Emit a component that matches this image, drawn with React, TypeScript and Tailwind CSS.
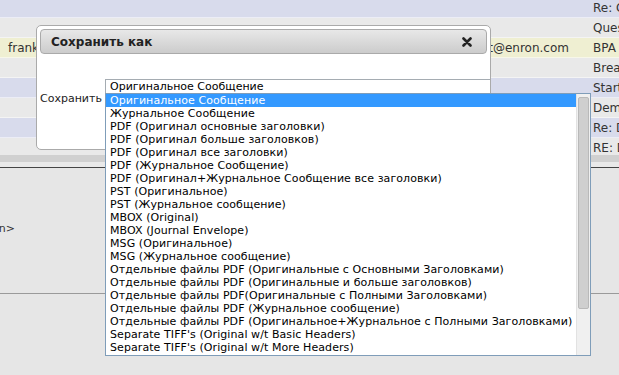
import React from "react"

const rows = [
  { bg: "bg-[#d8dbec]", from: "", to: "", subj: "Re: Gas" },
  { bg: "bg-[#e9e9e9]", from: "", to: "", subj: "Question" },
  { bg: "bg-[#efefd2]", from: "frank.ermis@enron.com", to: "bpa.contract@enron.com", subj: "BPA" },
  { bg: "bg-[#e9e9e9]", from: "", to: "", subj: "Breakout" },
  { bg: "bg-[#d8dbec]", from: "", to: "", subj: "Start" },
  { bg: "bg-[#e9e9e9]", from: "", to: "", subj: "Demand" },
  { bg: "bg-[#d8dbec]", from: "", to: "", subj: "Re: Deal" },
  { bg: "bg-[#e9e9e9]", from: "", to: "", subj: "RE: Deal" },
]

const options = [
  "Оригинальное Сообщение",
  "Журнальное Сообщение",
  "PDF (Оригинал основные заголовки)",
  "PDF (Оригинал больше заголовков)",
  "PDF (Оригинал все заголовки)",
  "PDF (Журнальное Сообщение)",
  "PDF (Оригинал+Журнальное Сообщение все заголовки)",
  "PST (Оригинальное)",
  "PST (Журнальное сообщение)",
  "MBOX (Original)",
  "MBOX (Journal Envelope)",
  "MSG (Оригинальное)",
  "MSG (Журнальное сообщение)",
  "Отдельные файлы PDF (Оригинальные с Основными Заголовками)",
  "Отдельные файлы PDF (Оригинальные и больше заголовков)",
  "Отдельные файлы PDF(Оригинальные с Полными Заголовками)",
  "Отдельные файлы PDF (Журнальное сообщение)",
  "Отдельные файлы PDF (Оригинальное+Журнальное с Полными Заголовками)",
  "Separate TIFF's (Original w/t Basic Headers)",
  "Separate TIFF's (Original w/t More Headers)",
]

const App = () => {
  return (
    <div className="relative w-[619px] h-[375px] overflow-hidden bg-[#e6e6e6] font-['DejaVu_Sans',sans-serif] text-[11px] text-[#333]">
      {/* message grid behind the dialog */}
      <div className="h-[155px] overflow-hidden text-[12px]">
        <div className="-mt-[2px] flex flex-col">
          {rows.map((r, i) => (
            <div key={i} className={`flex h-[20px] items-center border-b border-white/50 ${r.bg}`}>
              <div className="w-[120px] pl-[8px] whitespace-nowrap overflow-hidden">{r.from}</div>
              <div className="flex-1 pr-[19px] text-right whitespace-nowrap overflow-hidden">{r.to}</div>
              <div className="w-[31px] pl-[5px] whitespace-nowrap overflow-hidden">{r.subj}</div>
            </div>
          ))}
        </div>
      </div>
      <div className="h-[7px] bg-[#d0d0d0]" />
      <div className="h-[5px] bg-[#e9e9e9]" />
      <div className="h-px bg-[#444]" />
      <div className="h-[125px] flex items-center">
        <span className="-ml-[8px] pb-[2px]">on&gt;</span>
      </div>
      <div className="h-px bg-[#9a9a9a]" />

      {/* Save-as dialog */}
      <div className="absolute left-[36px] top-[25px] w-[455px] h-[125px] overflow-hidden rounded-[5px] border border-[#aaaaaa] bg-white p-[3px]">
        <div className="flex h-[25px] items-center justify-between rounded-[4px] border border-[#aaaaaa] bg-gradient-to-b from-[#e8e8e8] to-[#cccccc] pl-[10px] pr-[14px]">
          <span className="font-bold text-[12px] text-[#222]">Сохранить как</span>
          <svg width="10" height="10" viewBox="0 0 10 10">
            <path d="M1.5 1.5 L8.5 8.5 M8.5 1.5 L1.5 8.5" stroke="#222" strokeWidth="2.6" strokeLinecap="round" />
          </svg>
        </div>
        <div className="flex items-start pt-[25px] -mr-[3px]">
          <span className="w-[65px] mt-[13px] leading-[14px] text-[#222]">Сохранить</span>
          <div className="flex-1 h-[16px] border-t border-l border-[#a5acb2] pl-[4px] leading-[14px] text-black">
            Оригинальное Сообщение
          </div>
        </div>
      </div>

      {/* open dropdown list */}
      <div className="absolute left-[105px] top-[93px] w-[486px] h-[263px] flex border border-[#7f9db9] bg-white text-black tracking-[0.08px]">
        <div className="flex-1 flex flex-col">
          {options.map((o, i) => (
            <div
              key={i}
              className={`h-[13px] leading-[13px] pl-[4px] whitespace-nowrap ${i === 0 ? "bg-[#3399ff] text-white" : ""}`}
            >
              {o}
            </div>
          ))}
        </div>
        <div className="w-[14px] bg-[#f0f0f0] border-l border-[#e2e2e2] pt-[3px] px-[1px]">
          <div className="h-[212px] rounded-[2px] border border-[#b9b9b9] bg-[#cfcfcf]" />
        </div>
      </div>
    </div>
  )
}

export default App
